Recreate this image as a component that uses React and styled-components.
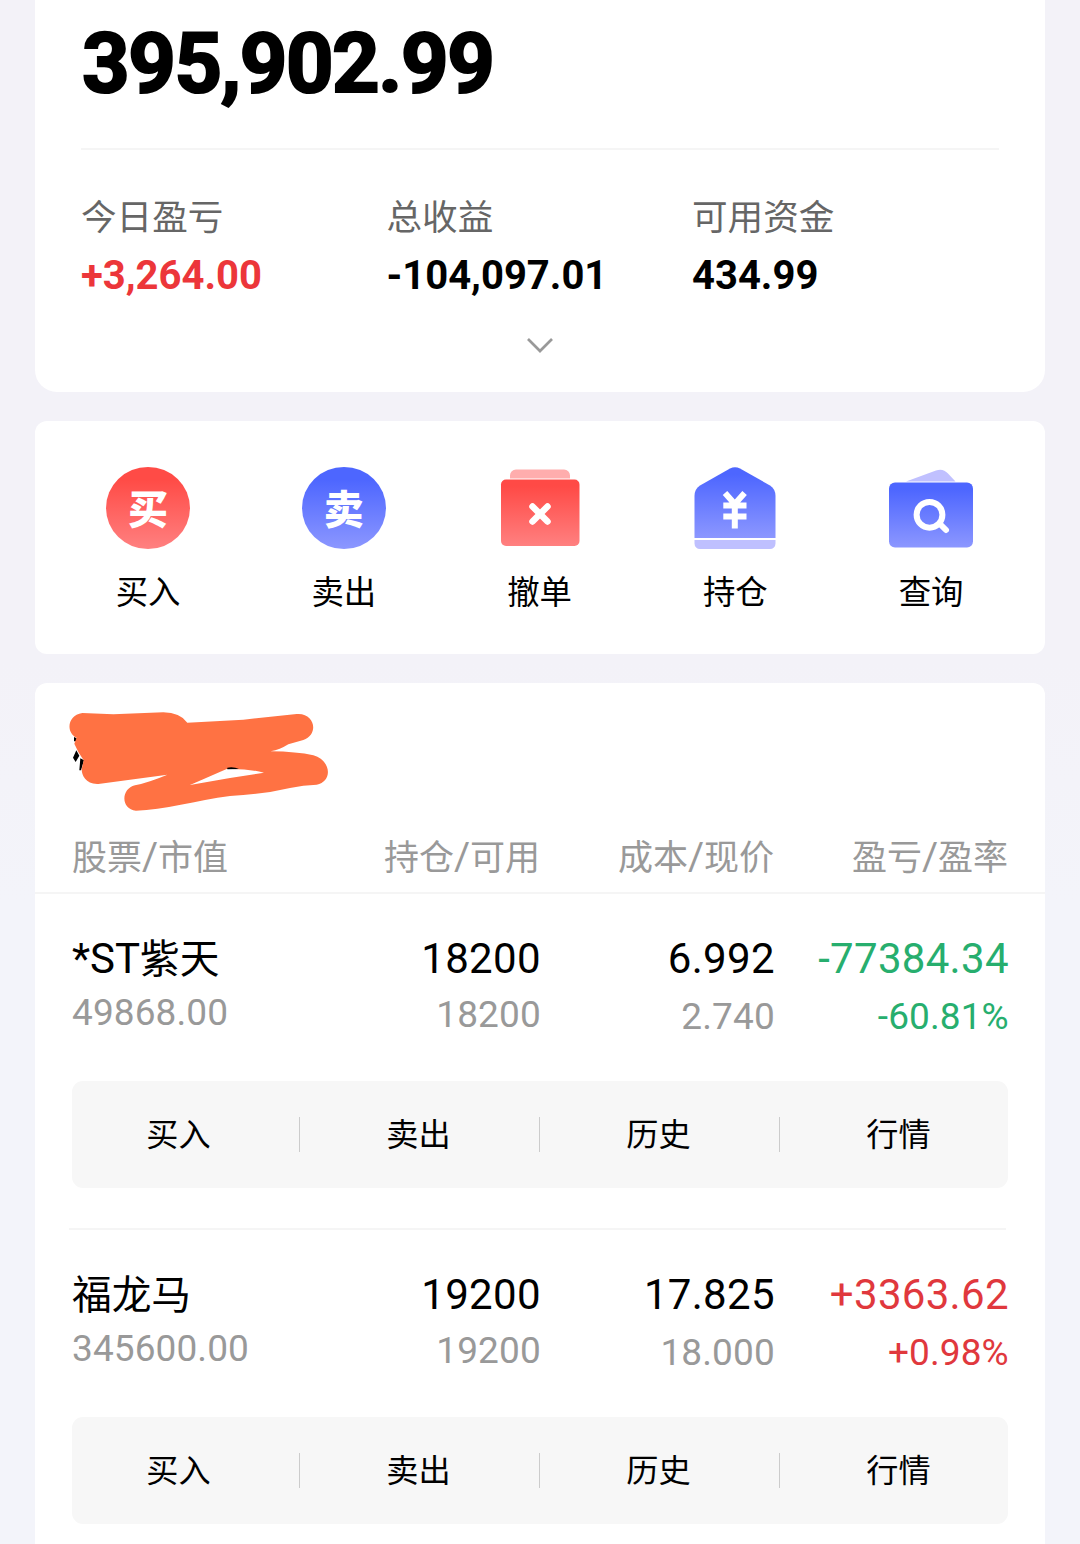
import React from 'react';
import styled, { createGlobalStyle } from 'styled-components';

const RED = '#ec363a';
const GREEN = '#27ae6e';

const GlobalStyle = createGlobalStyle`
    * {
        box-sizing: border-box;
    }
    body {
        margin: 0;
        font-family: Roboto, 'Noto Sans CJK SC', sans-serif;
        color: #000;
    }
`;

const Page = styled.main`
    width: 1080px;
    height: 1544px;
    overflow: hidden;
    padding: 0 35px;
    display: flex;
    flex-direction: column;
    gap: 29px;
    background: linear-gradient(#f3f2f8 0, #f3f2f8 660px, #f3f4fa 900px);
`;

const Card = styled.section`
    flex: none;
    background-color: #fff;
    border-radius: 12px;
`;

const SummaryCard = styled(Card)`
    height: 392px;
    padding: 14px 46px 0;
    border-radius: 0 0 22px 22px;
`;

const Total = styled.div`
    height: 134px;
    padding-left: 1px;
    line-height: 100px;
    font-size: 83px;
    font-weight: 700;
    letter-spacing: -1.4px;
    -webkit-text-stroke: 2.2px #000;
`;

const Stats = styled.div`
    display: grid;
    grid-template-columns: repeat(3, 305.5px);
    padding-top: 43px;
    border-top: 2px solid #f5f5f5;
`;

const Stat = styled.div`
    display: flex;
    flex-direction: column;
    gap: 8px;
    line-height: 50px;
`;

const StatLabel = styled.span`
    font-size: 35.6px;
    color: #666;
`;

const StatValue = styled.span`
    font-size: 40px;
    font-weight: 700;
    color: ${(props) => props.color || '#000'};
`;

const Expand = styled.div`
    display: flex;
    justify-content: center;
    padding-top: 36px;
`;

const ActionsCard = styled(Card)`
    height: 233px;
    padding: 45px 0 0 15.2px;
    display: grid;
    grid-template-columns: repeat(5, 195.75px);
`;

const Action = styled.div`
    display: flex;
    flex-direction: column;
    align-items: center;
    gap: 23px;
    font-size: 32.4px;
    line-height: 40px;
`;

const RoundIcon = styled.div`
    width: 84px;
    height: 82px;
    margin: 1px 0;
    padding-top: 5px;
    display: flex;
    align-items: center;
    justify-content: center;
    border-radius: 50%;
    color: #fff;
    font-size: 40px;
    font-weight: 900;
    line-height: 77px;
    background: linear-gradient(${(props) => props.from} 15%, ${(props) => props.to});
`;

const HoldingsCard = styled(Card)`
    height: 900px;
`;

const AccountName = styled.div`
    height: 151px;
    padding: 25px 0 0 30px;
`;

const Columns = styled.div`
    display: grid;
    grid-template-columns: repeat(4, 234px);
    line-height: 50px;
    text-align: right;
    > :first-child {
        text-align: left;
    }
`;

const TableHead = styled(Columns)`
    height: 60px;
    padding: 0 37px;
    font-size: 35px;
    color: #999;
    border-bottom: 2px solid #f5f5f5;
`;

const Slash = styled.span`
    font-size: 39px;
    line-height: 1;
`;

const Holding = styled.div`
    height: 334px;
    margin: 0 39px 0 34px;
    padding: 40px 0 0 3px;
    & + & {
        height: 336px;
        border-top: 2px solid #f5f5f5;
    }
`;

const HoldingColumns = styled(Columns)`
    height: 147px;
`;

const Cell = styled.div`
    display: flex;
    flex-direction: column;
    gap: ${(props) => props.gap}px;
    margin-right: -0.8px;
    white-space: nowrap;
    color: ${(props) => props.color || '#000'};
`;

const Name = styled.span`
    padding-top: 1px;
    font-size: 39.7px;
`;

const Flag = styled.span`
    font-size: 42px;
    line-height: 1;
`;

const Main = styled.span`
    font-size: 42px;
    letter-spacing: 0.3px;
`;

const Sub = styled.span`
    font-size: 37px;
    letter-spacing: 0.1px;
    color: ${(props) => (props.$tinted ? 'inherit' : '#999')};
`;

const ButtonBar = styled.div`
    width: 936px;
    height: 107px;
    overflow: hidden;
    display: flex;
    align-items: center;
    border-radius: 11px;
    background-color: #f7f7f7;
`;

const Buttons = styled.div`
    flex: none;
    display: grid;
    grid-template-columns: repeat(4, 240px);
    margin-left: -12px;
`;

const BarButton = styled.div`
    height: 35px;
    padding-right: 2px;
    line-height: 37px;
    font-size: 32.2px;
    text-align: center;
    border-right: 1px solid #ccc;
    &:last-child {
        border-right-color: transparent;
    }
`;

const Gradient = ({ id, from, to }) => (
    <linearGradient id={id} x1="0" y1="0" x2="0" y2="1">
        <stop offset="0.1" stopColor={from} />
        <stop offset="1" stopColor={to} />
    </linearGradient>
);

const CancelIcon = () => (
    <svg width="84" height="84" viewBox="0 0 84 84">
        <defs><Gradient id="cancel" from="#ff4a46" to="#ff8080" /></defs>
        <path d="M12 12.5V9.5a6 6 0 0 1 6-6h48a6 6 0 0 1 6 6v3z" fill="#ffadad" />
        <rect x="3" y="13.5" width="78.5" height="66.5" rx="5" fill="url(#cancel)" />
        <path d="M34.5 40.5l15 15M49.5 40.5l-15 15" stroke="#fff" strokeWidth="6.5" strokeLinecap="round" />
    </svg>
);

const PositionIcon = () => (
    <svg width="84" height="84" viewBox="0 0 84 84">
        <defs><Gradient id="position" from="#4d66ff" to="#8c97ff" /></defs>
        <path d="M1.5 72V30Q1.5 23 7 19.5L37 2.5Q42 0 47 2.5L77 19.5Q82.5 23 82.5 30V72z" fill="url(#position)" />
        <path d="M1.5 74h81v3.5a5.5 5.5 0 0 1-5.5 5.5h-70a5.5 5.5 0 0 1-5.5-5.5z" fill="#bfc0ff" />
        <path d="M32 27l9.8 11 9.8-11M30.3 39.5h23.2M30.3 50.5h23.2M41.8 38v24.5" fill="none" stroke="#fff" strokeWidth="6" />
    </svg>
);

const QueryIcon = () => (
    <svg width="84" height="84" viewBox="0 0 84 84">
        <defs><Gradient id="query" from="#4d66ff" to="#8c97ff" /></defs>
        <path d="M17 15.5L47 4.5Q54 2 59 7.5L66.5 15.5z" fill="#c0c0ff" />
        <rect x="0" y="16.5" width="84" height="65" rx="6" fill="url(#query)" />
        <circle cx="40.5" cy="48.8" r="12.9" fill="none" stroke="#fff" strokeWidth="6" />
        <path d="M50.5 57.5l6.5 6.5" stroke="#fff" strokeWidth="6" strokeLinecap="round" />
    </svg>
);

const ChevronIcon = () => (
    <svg width="28" height="18" viewBox="0 0 28 18">
        <path d="M2 2l12 12 12-12" fill="none" stroke="#999" strokeWidth="2.7" />
    </svg>
);

// marker strokes that cover the account name
const Scribble = () => (
    <svg width="270" height="106" viewBox="105 83 810 318">
        <path d="M132 170l8 4v9h-8zM139 210l9 16-11 19-8-13zM151 234l11 6-9 30h-5z" />
        <path
            fill="#ff7243"
            fillRule="evenodd"
            d="M157 98L250 102L400 96Q450 97 472 127L640 118L800 101C855 96 868 163 820 179L775 192Q750 208 722 213Q800 214 850 225C905 240 908 305 860 313Q820 314 780 323Q700 342 600 347C500 360 400 390 318 391C272 388 272 325 315 315Q360 305 412 283L300 298L205 311C168 313 155 285 155 267L161 240L145 215L133 190L140 172C108 158 110 105 157 98ZM480 314L590 266Q650 264 702 277L600 293Z"
        />
        <path d="M592 262q20-3 35 4l-35 1z" />
    </svg>
);

const actions = [
    { label: '买入', icon: <RoundIcon from="#ff4b46" to="#ff8080">买</RoundIcon> },
    { label: '卖出', icon: <RoundIcon from="#4d66ff" to="#8c97ff">卖</RoundIcon> },
    { label: '撤单', icon: <CancelIcon /> },
    { label: '持仓', icon: <PositionIcon /> },
    { label: '查询', icon: <QueryIcon /> },
];

const headings = [['股票', '市值'], ['持仓', '可用'], ['成本', '现价'], ['盈亏', '盈率']];

const holdings = [
    {
        flag: '*ST', name: '紫天', value: '49868.00', amount: '18200', available: '18200',
        cost: '6.992', price: '2.740', profit: '-77384.34', rate: '-60.81%', color: GREEN,
    },
    {
        name: '福龙马', value: '345600.00', amount: '19200', available: '19200',
        cost: '17.825', price: '18.000', profit: '+3363.62', rate: '+0.98%', color: '#e0383d',
    },
];

const HoldingRow = ({ item }) => (
    <Holding>
        <HoldingColumns>
            <Cell gap={3}>
                <Name>{item.flag && <Flag>{item.flag}</Flag>}{item.name}</Name>
                <Sub>{item.value}</Sub>
            </Cell>
            <Cell gap={6}><Main>{item.amount}</Main><Sub>{item.available}</Sub></Cell>
            <Cell gap={8}><Main>{item.cost}</Main><Sub>{item.price}</Sub></Cell>
            <Cell gap={8} color={item.color}><Main>{item.profit}</Main><Sub $tinted>{item.rate}</Sub></Cell>
        </HoldingColumns>
        <ButtonBar>
            <Buttons>
                {['买入', '卖出', '历史', '行情'].map((label) => <BarButton key={label}>{label}</BarButton>)}
            </Buttons>
        </ButtonBar>
    </Holding>
);

const App = () => (
    <>
        <GlobalStyle />
        <Page>
            <SummaryCard>
                <Total>395,902.99</Total>
                <Stats>
                    <Stat><StatLabel>今日盈亏</StatLabel><StatValue color={RED}>+3,264.00</StatValue></Stat>
                    <Stat><StatLabel>总收益</StatLabel><StatValue>-104,097.01</StatValue></Stat>
                    <Stat><StatLabel>可用资金</StatLabel><StatValue>434.99</StatValue></Stat>
                </Stats>
                <Expand><ChevronIcon /></Expand>
            </SummaryCard>
            <ActionsCard>
                {actions.map(({ label, icon }) => <Action key={label}>{icon}<span>{label}</span></Action>)}
            </ActionsCard>
            <HoldingsCard>
                <AccountName><Scribble /></AccountName>
                <TableHead>
                    {headings.map(([top, bottom]) => <span key={top}>{top}<Slash>/</Slash>{bottom}</span>)}
                </TableHead>
                {holdings.map((item) => <HoldingRow key={item.name} item={item} />)}
            </HoldingsCard>
        </Page>
    </>
);

export default App;
